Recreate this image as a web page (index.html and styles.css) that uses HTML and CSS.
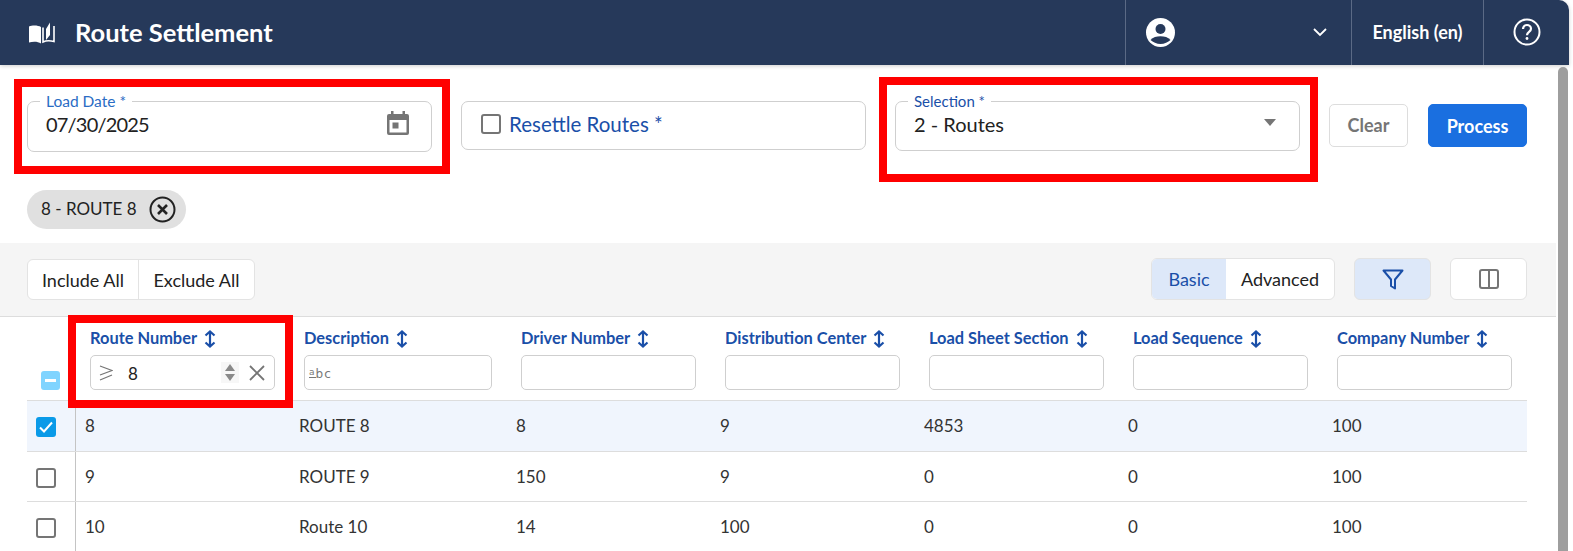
FILE: index.html
```html
<!DOCTYPE html>
<html lang="en">
<head>
    <meta charset="UTF-8">
    <meta name="viewport" content="width=device-width, initial-scale=1.0">
    <title>Route Settlement</title>
    <link rel="stylesheet" href="styles.css">
</head>
<body>
    <div class="page">
        <header class="topbar">
            <svg class="bookIcon" viewBox="0 0 26 22" width="26" height="22">
                <path fill="#fff" d="M0 4.500C3 3 9 3 12 5v16.500C9 19.500 4 19.500 0 20.500z"/>
                <path fill="none" stroke="#fff" stroke-width="1.600" d="M14 5.500v14.500c3-1.500 7-1.500 11-.5V4"/>
                <path fill="#fff" d="M17 7l4-6.500v12.500l-4 5z"/>
            </svg>
            <div class="title">Route Settlement</div>
            <div class="topRight">
                <div class="userBox">
                    <svg viewBox="0 0 29 29" width="29" height="29">
                        <circle cx="14.500" cy="14.500" r="14.500" fill="#fff"/>
                        <circle cx="14.500" cy="11" r="5" fill="#26395a"/>
                        <path fill="#26395a" d="M4.500 22c2.500-3 6-3.800 10-3.800s7.500.8 10 3.800c-2.500 2.300-6 4-10 4s-7.500-1.700-10-4z"/>
                    </svg>
                    <svg class="chevron" viewBox="0 0 14 9" width="14" height="9">
                        <path fill="none" stroke="#fff" stroke-width="1.800" d="M1 1l6 6 6-6"/>
                    </svg>
                </div>
                <div class="langBox">English (en)</div>
                <div class="helpBox">
                    <svg viewBox="0 0 28 28" width="28" height="28">
                        <circle cx="14" cy="14" r="12.500" fill="none" stroke="#fff" stroke-width="2"/>
                        <path fill="none" stroke="#fff" stroke-width="2.200" d="M10 11c0-2.500 2-4 4-4s4 1.500 4 3.700c0 3.300-4 3-4 6.500"/>
                        <circle cx="14" cy="20.500" r="1.400" fill="#fff"/>
                    </svg>
                </div>
            </div>
        </header>

        <div class="scrollbar"></div>

        <main class="content">
            <div class="formRow">
                <div class="field dateField">
                    <label class="fieldLabel">Load Date *</label>
                    <span class="fieldValue dateValue">07/30/2025</span>
                    <svg class="calIcon" viewBox="0 0 24 26" width="24" height="26">
                        <path fill="#757575" d="M5 1h2.500v3h9V1H19v3h2a2 2 0 0 1 2 2v17a2 2 0 0 1-2 2H3a2 2 0 0 1-2-2V6a2 2 0 0 1 2-2h2zM3.500 10v12.500h17V10z"/>
                        <rect x="6.500" y="12.500" width="6" height="6" fill="#757575"/>
                    </svg>
                </div>
                <div class="field checkField">
                    <span class="box grayBox"></span>
                    <span class="checkLabel">Resettle Routes *</span>
                </div>
                <div class="field selectField">
                    <label class="fieldLabel">Selection *</label>
                    <span class="fieldValue">2 - Routes</span>
                    <span class="caret"></span>
                </div>
                <button class="btn clearBtn">Clear</button>
                <button class="btn processBtn">Process</button>
            </div>

            <div class="chipRow">
                <div class="chip">
                    <span>8 - ROUTE 8</span>
                    <svg viewBox="0 0 27 27" width="27" height="27">
                        <circle cx="13.500" cy="13.500" r="12" fill="none" stroke="#222" stroke-width="2"/>
                        <path fill="none" stroke="#222" stroke-width="2.600" d="M9 9l9 9M18 9l-9 9"/>
                    </svg>
                </div>
            </div>

            <div class="toolbar">
                <div class="btnGroup allGroup">
                    <button class="groupBtn includeBtn">Include All</button>
                    <button class="groupBtn excludeBtn">Exclude All</button>
                </div>
                <div class="toolRight">
                    <div class="btnGroup modeGroup">
                        <button class="groupBtn basicBtn active">Basic</button>
                        <button class="groupBtn advBtn">Advanced</button>
                    </div>
                    <button class="iconBtn active">
                        <svg viewBox="0 0 22 21" width="22" height="21">
                            <path fill="none" stroke="#1a4fa8" stroke-width="2" stroke-linejoin="round" d="M1.500 1.500h19l-7.500 9v9l-4-2.500v-6.500z"/>
                        </svg>
                    </button>
                    <button class="iconBtn">
                        <svg viewBox="0 0 20 20" width="20" height="20">
                            <path fill="none" stroke="#757575" stroke-width="2" d="M3 1h14a2 2 0 0 1 2 2v14a2 2 0 0 1-2 2H3a2 2 0 0 1-2-2V3a2 2 0 0 1 2-2zM10 1v18"/>
                        </svg>
                    </button>
                </div>
            </div>

            <div class="tableWrap">
                <div class="row headRow">
                    <div class="checkCell headCheck"><span class="box minusBox"></span></div>
                    <div class="headCell">
                        <div class="headLabel">Route Number <svg class="sortIcon" viewBox="0 0 12 18"><use href="#sort"/></svg></div>
                        <div class="filterInput routeFilter">
                            <svg class="geqIcon" viewBox="0 0 14 16" width="14" height="16">
                                <path fill="none" stroke="#757575" stroke-width="1.200" d="M1 1l12 4.500L1 10M1 15l12-5"/>
                            </svg>
                            <span class="filterVal">8</span>
                            <span class="spin"><i class="up"></i><i class="down"></i></span>
                            <svg class="clearIcon" viewBox="0 0 16 16" width="16" height="16">
                                <path fill="none" stroke="#757575" stroke-width="1.800" d="M1 1l14 14M15 1L1 15"/>
                            </svg>
                        </div>
                    </div>
                    <div class="headCell">
                        <div class="headLabel">Description <svg class="sortIcon" viewBox="0 0 12 18"><use href="#sort"/></svg></div>
                        <div class="filterInput"><span class="abc"><span class="abcA">a</span>bc</span></div>
                    </div>
                    <div class="headCell">
                        <div class="headLabel">Driver Number <svg class="sortIcon" viewBox="0 0 12 18"><use href="#sort"/></svg></div>
                        <div class="filterInput"></div>
                    </div>
                    <div class="headCell">
                        <div class="headLabel">Distribution Center <svg class="sortIcon" viewBox="0 0 12 18"><use href="#sort"/></svg></div>
                        <div class="filterInput"></div>
                    </div>
                    <div class="headCell">
                        <div class="headLabel">Load Sheet Section <svg class="sortIcon" viewBox="0 0 12 18"><use href="#sort"/></svg></div>
                        <div class="filterInput"></div>
                    </div>
                    <div class="headCell">
                        <div class="headLabel">Load Sequence <svg class="sortIcon" viewBox="0 0 12 18"><use href="#sort"/></svg></div>
                        <div class="filterInput"></div>
                    </div>
                    <div class="headCell">
                        <div class="headLabel">Company Number <svg class="sortIcon" viewBox="0 0 12 18"><use href="#sort"/></svg></div>
                        <div class="filterInput"></div>
                    </div>
                </div>

                <div class="row dataRow selected">
                    <div class="checkCell"><span class="box blueBox">
                        <svg viewBox="0 0 20 20" width="20" height="20"><path fill="none" stroke="#fff" stroke-width="2" d="M4 10.500l4 4 8-9"/></svg>
                    </span></div>
                    <div class="cell">8</div><div class="cell">ROUTE 8</div><div class="cell">8</div><div class="cell">9</div><div class="cell">4853</div><div class="cell">0</div><div class="cell">100</div>
                </div>
                <div class="row dataRow">
                    <div class="checkCell"><span class="box grayBox"></span></div>
                    <div class="cell">9</div><div class="cell">ROUTE 9</div><div class="cell">150</div><div class="cell">9</div><div class="cell">0</div><div class="cell">0</div><div class="cell">100</div>
                </div>
                <div class="row dataRow">
                    <div class="checkCell"><span class="box grayBox"></span></div>
                    <div class="cell">10</div><div class="cell">Route 10</div><div class="cell">14</div><div class="cell">100</div><div class="cell">0</div><div class="cell">0</div><div class="cell">100</div>
                </div>
            </div>
        </main>

        <!-- red annotation boxes drawn on top of the page -->
        <div class="redBox redDate"></div>
        <div class="redBox redSelect"></div>
        <div class="redBox redRoute"></div>
    </div>

    <svg class="defs" width="0" height="0">
        <symbol id="sort" viewBox="0 0 12 18">
            <path fill="none" stroke="#1a4fa8" stroke-width="2.200" d="M6 1.500v15M1.500 5.500L6 1.500l4.500 4M1.500 12.500L6 16.500l4.500-4"/>
        </symbol>
    </svg>
</body>
</html>
```

FILE: styles.css
```css
*{
    box-sizing: border-box;
}
html,body{
    margin: 0;
    height: 100%;
    overflow: hidden;
    background: #fff;
}
body{
    font-family: "Lato", "Noto Sans", sans-serif;
    color: #222;
}
.page{
    position: relative;
    width: 1573px;
    height: 551px;
    overflow: hidden;
}

/* top bar */
.topbar{
    width: 1569px;
    height: 65px;
    background: #26395a;
    border-top-right-radius: 10px;
    display: flex;
    align-items: center;
    color: #fff;
    padding-left: 29px;
    box-shadow: 0 1px 4px rgba(0,0,0,0.2);
    position: relative;
}
.bookIcon{
    margin-right: 20px;
}
.title{
    font-size: 25.500px;
    font-weight: 700;
    margin-top: -2px;
}
.topRight{
    margin-left: auto;
    display: flex;
    height: 65px;
}
.userBox{
    width: 226px;
    border-left: 1px solid #5b6a85;
    display: flex;
    align-items: center;
    justify-content: space-between;
    padding: 0 24px 0 20px;
}
.langBox{
    width: 132px;
    border-left: 1px solid #5b6a85;
    display: flex;
    align-items: center;
    justify-content: center;
    font-size: 18px;
    font-weight: 700;
    padding-bottom: 2px;
}
.helpBox{
    width: 86px;
    border-left: 1px solid #5b6a85;
    display: flex;
    align-items: center;
    padding-left: 29px;
    padding-bottom: 2px;
}
.scrollbar{
    position: absolute;
    left: 1558px;
    top: 67px;
    width: 10px;
    height: 484px;
    background: #9e9e9e;
    border-radius: 5px 5px 0 0;
}

.content{
    width: 1556px;
}

/* form row */
.formRow{
    display: flex;
    align-items: flex-start;
    gap: 29px;
    padding: 36px 0 0 27px;
}
.field{
    position: relative;
    width: 405px;
    border: 1px solid #cfcfcf;
    border-radius: 7px;
    display: flex;
    align-items: center;
    background: #fff;
}
.dateField{
    height: 51px;
    padding: 0 18px 5px;
}
.checkField{
    height: 49px;
    padding: 0 0 3px 19px;
    gap: 8px;
}
.selectField{
    height: 50px;
    padding: 0 18px 4px;
}
.fieldLabel{
    position: absolute;
    left: 12px;
    top: -9px;
    padding: 0 6px;
    background: #fff;
    font-size: 15.500px;
    line-height: 16px;
    color: #2a6cc4;
}
.selectField .fieldLabel{
    color: #1a4fa8;
    font-size: 15px;
}
.fieldValue{
    font-size: 20px;
    color: #222;
}
.dateValue{
    letter-spacing: -0.8px;
}
.calIcon{
    margin-left: auto;
    margin-right: 3px;
    margin-bottom: 3px;
}
.caret{
    margin-left: auto;
    margin-right: 5px;
    margin-top: -3px;
    width: 0;
    height: 0;
    border-left: 6px solid transparent;
    border-right: 6px solid transparent;
    border-top: 7px solid #757575;
}
.checkLabel{
    font-size: 20.500px;
    color: #1a4fa8;
}
.box{
    display: inline-block;
    width: 20px;
    height: 20px;
    border-radius: 3px;
    flex: none;
}
.grayBox{
    border: 2px solid #757575;
}
.blueBox{
    background: #0a9ae8;
}
.minusBox{
    width: 19px;
    height: 19px;
    background: #80d4ff;
    position: relative;
}
.minusBox::after{
    content: "";
    position: absolute;
    left: 4px;
    top: 8px;
    width: 11px;
    height: 3px;
    background: #fff;
}

.btn{
    height: 43px;
    margin-top: 3px;
    padding-bottom: 3px;
    border-radius: 5px;
    font-family: inherit;
    font-size: 18px;
    font-weight: 700;
}
.clearBtn{
    width: 79px;
    margin-right: -9px;
    background: #fff;
    border: 1px solid #ddd;
    color: #757575;
}
.processBtn{
    width: 99px;
    padding-bottom: 1px;
    background: #1a6fe0;
    border: 1px solid #1a6fe0;
    color: #fff;
}

/* chip */
.chipRow{
    padding: 0 0 0 27px;
    margin-top: 38px;
}
.chip{
    display: inline-flex;
    align-items: center;
    gap: 12px;
    height: 39px;
    width: 159px;
    padding-left: 14px;
    padding-right: 9px;
    background: #e0e0e0;
    border-radius: 20px;
    font-size: 17px;
}
.chip span{
    margin-top: -2px;
}

/* toolbar */
.toolbar{
    margin-top: 14px;
    height: 74px;
    background: #f5f5f5;
    border-bottom: 1px solid #ddd;
    display: flex;
    align-items: flex-start;
    justify-content: space-between;
    padding: 15px 29px 0 27px;
}
.toolRight{
    display: flex;
    gap: 19px;
}
.btnGroup{
    display: flex;
    height: 42px;
    border: 1px solid #e3e3e3;
    border-radius: 6px;
    background: #fff;
    overflow: hidden;
}
.allGroup{
    margin-top: 1px;
    height: 41px;
}
.groupBtn{
    border: 0;
    background: transparent;
    font-family: inherit;
    font-size: 18px;
    color: #222;
}
.includeBtn{
    width: 111px;
    border-right: 1px solid #e3e3e3;
}
.excludeBtn{
    width: 115px;
}
.basicBtn{
    width: 74px;
}
.advBtn{
    width: 108px;
}
.active{
    background: #dde8f9;
    color: #1a4fa8;
}
.iconBtn{
    width: 77px;
    height: 42px;
    border: 1px solid #e3e3e3;
    border-radius: 6px;
    background: #fff;
    display: flex;
    align-items: center;
    justify-content: center;
}
.iconBtn.active{
    background: #dde8f9;
}

/* table */
.tableWrap{
    margin-left: 27px;
    width: 1500px;
}
.row{
    display: grid;
    grid-template-columns: 49px 214px 217px 204px 204px 204px 204px 204px;
}
.headRow{
    height: 84px;
    border-bottom: 1px solid #ddd;
}
.headCell{
    padding: 10px 15px 0 14px;
}
.headLabel{
    display: flex;
    align-items: center;
    gap: 7px;
    height: 20px;
    font-size: 16.400px;
    font-weight: 700;
    color: #1a4fa8;
    white-space: nowrap;
}
.sortIcon{
    width: 12px;
    height: 18px;
    margin-top: 4px;
}
.filterInput{
    margin-top: 8px;
    height: 35px;
    border: 1px solid #cfcfcf;
    border-radius: 5px;
    background: #fff;
    display: flex;
    align-items: center;
}
.geqIcon{
    margin-left: 8px;
    margin-right: 15px;
}
.filterVal{
    font-size: 17px;
    margin-top: 2px;
}
.spin{
    margin-left: auto;
    display: flex;
    flex-direction: column;
    align-items: center;
    gap: 3px;
    width: 18px;
    padding: 2px 0;
    background: #f7f7f7;
}
.spin i{
    width: 0;
    height: 0;
    border-left: 5px solid transparent;
    border-right: 5px solid transparent;
}
.spin .up{
    border-bottom: 7px solid #8a8a8a;
}
.spin .down{
    border-top: 7px solid #8a8a8a;
}
.clearIcon{
    margin: 0 9px 0 10px;
}
.abc{
    margin-left: 4px;
    font-family: "DejaVu Sans", sans-serif;
    font-size: 12px;
    letter-spacing: 1px;
    color: #777;
    margin-top: 2px;
}
.abcA{
    font-size: 9px;
    vertical-align: 3px;
    border-bottom: 1px solid #777;
}
.headCheck{
    align-items: flex-end;
    padding-bottom: 10px;
    padding-left: 14px;
}
.checkCell{
    display: flex;
}
.dataRow{
    height: 50.500px;
    border-bottom: 1px solid #ddd;
    align-items: center;
}
.dataRow .checkCell{
    height: 100%;
    align-items: center;
    padding-left: 9px;
    padding-top: 3px;
    border-right: 1px solid #c4c4c4;
}
.selected{
    background: #f0f5fd;
}
.cell{
    padding-left: 9px;
    font-size: 17px;
    color: #333;
}

/* red markers */
.redBox{
    position: absolute;
    border: 8px solid #ff0000;
}
.redDate{
    left: 14px;
    top: 79px;
    width: 436px;
    height: 95px;
}
.redSelect{
    left: 879px;
    top: 77px;
    width: 439px;
    height: 105px;
}
.redRoute{
    left: 68px;
    top: 315px;
    width: 225px;
    height: 93px;
}
.defs{
    position: absolute;
}
```
